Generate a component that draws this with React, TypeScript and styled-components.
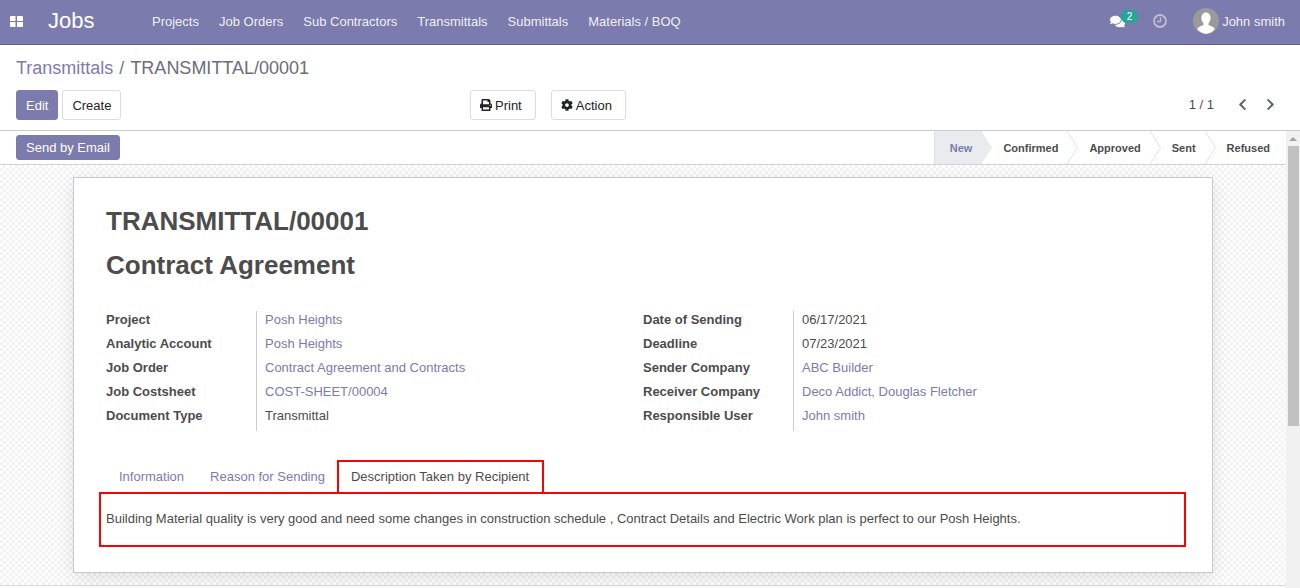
import React from 'react';
import styled, { createGlobalStyle } from 'styled-components';
import { FaPrint, FaCog, FaChevronLeft, FaChevronRight, FaComments } from 'react-icons/fa';

const GlobalStyle = createGlobalStyle`
    html, body {
        margin: 0;
        height: 100%;
        overflow: hidden;
    }
    body {
        font-family: "Liberation Sans", Arial, sans-serif;
        font-size: 13px;
        color: #4c4c4c;
    }
`;

const navLinks = ['Projects', 'Job Orders', 'Sub Contractors', 'Transmittals', 'Submittals', 'Materials / BOQ'];
const steps = ['New', 'Confirmed', 'Approved', 'Sent', 'Refused'];

const leftFields = [
    { label: 'Project', value: 'Posh Heights', link: true },
    { label: 'Analytic Account', value: 'Posh Heights', link: true },
    { label: 'Job Order', value: 'Contract Agreement and Contracts', link: true },
    { label: 'Job Costsheet', value: 'COST-SHEET/00004', link: true },
    { label: 'Document Type', value: 'Transmittal', link: false },
];
const rightFields = [
    { label: 'Date of Sending', value: '06/17/2021', link: false },
    { label: 'Deadline', value: '07/23/2021', link: false },
    { label: 'Sender Company', value: 'ABC Builder', link: true },
    { label: 'Receiver Company', value: 'Deco Addict, Douglas Fletcher', link: true },
    { label: 'Responsible User', value: 'John smith', link: true },
];

const FieldGroup = ({ fields }: { fields: typeof leftFields }) => (
    <Fields>
        {fields.map((f) => (
            <React.Fragment key={f.label}>
                <FieldLabel>{f.label}</FieldLabel>
                <FieldValue $link={f.link}>{f.value}</FieldValue>
            </React.Fragment>
        ))}
    </Fields>
);

const App = () => {
    return (
        <Page>
            <GlobalStyle />
            <NavBar>
                <AppsIcon>
                    <svg width="13" height="11" viewBox="0 0 13 11">
                        <path d="M0 1a1 1 0 0 1 1-1h4.500v5H0zM7 0h5a1 1 0 0 1 1 1v4H7zM0 6h5.500v5H1a1 1 0 0 1-1-1zM7 6h6v4a1 1 0 0 1-1 1H7z" fill="#fff" />
                    </svg>
                </AppsIcon>
                <Brand>Jobs</Brand>
                <NavLinks>
                    {navLinks.map((l) => <NavLink key={l}>{l}</NavLink>)}
                </NavLinks>
                <NavRight>
                    <Messages>
                        <FaComments />
                        <Badge>2</Badge>
                    </Messages>
                    <Activity>
                        <svg width="14" height="14" viewBox="0 0 14 14">
                            <circle cx="7" cy="7" r="6" fill="none" stroke="currentColor" strokeWidth="1.800" />
                            <path d="M7.500 3.200v4.300H4" fill="none" stroke="currentColor" strokeWidth="1.300" />
                        </svg>
                    </Activity>
                    <User>
                        <Avatar>
                            <svg width="26" height="26" viewBox="0 0 26 26">
                                <circle cx="13" cy="13" r="13" fill="#9a9a9a" />
                                <path d="M13 4.500c3 0 4.600 2.500 4.600 5.600 0 2.200-.9 4.100-2.100 5.200v1.600c1.800 1 5.300 1.600 6.300 4.200A13 13 0 0 1 13 26a13 13 0 0 1-8.800-4.900c1-2.600 4.500-3.200 6.300-4.200v-1.600c-1.200-1.100-2.100-3-2.100-5.200C8.400 7 10 4.500 13 4.500z" fill="#fff" />
                            </svg>
                        </Avatar>
                        <span>John smith</span>
                    </User>
                </NavRight>
            </NavBar>
            <ControlPanel>
                <Breadcrumb>
                    <CrumbLink>Transmittals</CrumbLink>
                    <CrumbSep>/</CrumbSep>
                    <span>TRANSMITTAL/00001</span>
                </Breadcrumb>
                <ControlRow>
                    <Buttons>
                        <Button $primary>Edit</Button>
                        <Button>Create</Button>
                    </Buttons>
                    <Sidebar>
                        <IconButton><FaPrint size={12} /> Print</IconButton>
                        <IconButton><FaCog size={12} /> Action</IconButton>
                    </Sidebar>
                    <Pager>
                        <span>1 / 1</span>
                        <PagerArrows>
                            <FaChevronLeft size={13} />
                            <FaChevronRight size={13} />
                        </PagerArrows>
                    </Pager>
                </ControlRow>
            </ControlPanel>
            <Body>
                <Main>
                    <StatusBar>
                        <SmallButton $primary>Send by Email</SmallButton>
                        <Steps>
                            {steps.map((s, i) => (
                                <Step key={s} $active={i === 0}>
                                    {s}
                                    {i < steps.length - 1 && (
                                        <Chevron viewBox="0 0 11 33" width="11" height="33">
                                            <polygon points="0,0 10.500,16.500 0,33" fill={i === 0 ? '#e9ecef' : '#fff'} />
                                            <polyline points="0,0 10.500,16.500 0,33" fill="none" stroke={i === 0 ? '#e9ecef' : '#dee2e6'} />
                                        </Chevron>
                                    )}
                                </Step>
                            ))}
                        </Steps>
                    </StatusBar>
                    <Sheet>
                        <Card>
                            <Title>TRANSMITTAL/00001</Title>
                            <Title>Contract Agreement</Title>
                            <Groups>
                                <FieldGroup fields={leftFields} />
                                <FieldGroup fields={rightFields} />
                            </Groups>
                            <Tabs>
                                <Tab>Information</Tab>
                                <Tab>Reason for Sending</Tab>
                                <ActiveTab>Description Taken by Recipient</ActiveTab>
                            </Tabs>
                            <TabPanel>
                                Building Material quality is very good and need some changes in construction schedule , Contract Details and Electric Work plan is perfect to our Posh Heights.
                            </TabPanel>
                        </Card>
                    </Sheet>
                </Main>
                <ScrollBar>
                    <ScrollArrow />
                    <ScrollThumb />
                </ScrollBar>
            </Body>
        </Page>
    );
};

const Page = styled.div`
    display: flex;
    flex-direction: column;
    width: 1300px;
    height: 588px;
    overflow: hidden;
    background: #fff;
`;

const NavBar = styled.div`
    display: flex;
    align-items: center;
    height: 45px;
    padding-bottom: 2px;
    box-sizing: border-box;
    flex: none;
    background: #7c7bad;
    border-bottom: 1px solid #5f5e97;
    color: #fff;
`;

const AppsIcon = styled.div`
    display: flex;
    width: 32px;
    padding-left: 10px;
    box-sizing: border-box;
`;

const Brand = styled.div`
    width: 120px;
    padding-left: 16px;
    box-sizing: border-box;
    font-size: 22px;
`;

const NavLinks = styled.div`
    display: flex;
    gap: 20px;
`;

const NavLink = styled.span`
    font-size: 13px;
    color: rgba(255, 255, 255, 0.9);
`;

const NavRight = styled.div`
    display: flex;
    align-items: center;
    margin-left: auto;
    padding-right: 15px;
`;

const Messages = styled.div`
    position: relative;
    display: flex;
    font-size: 15px;
    margin-right: 28px;
`;

const Badge = styled.span`
    position: absolute;
    top: -4px;
    left: 11px;
    width: 17px;
    height: 13px;
    border-radius: 6px;
    background: #26a69a;
    font-size: 10px;
    line-height: 13px;
    text-align: center;
`;

const Activity = styled.div`
    display: flex;
    color: rgba(255, 255, 255, 0.5);
    margin-right: 26px;
`;

const User = styled.div`
    display: flex;
    align-items: center;
    gap: 3px;
    color: rgba(255, 255, 255, 0.9);
`;

const Avatar = styled.div`
    display: flex;
`;

const ControlPanel = styled.div`
    flex: none;
    height: 86px;
    padding: 0 16px;
    box-sizing: border-box;
    border-bottom: 1px solid #ccc;
    background: #fff;
`;

const Breadcrumb = styled.div`
    display: flex;
    gap: 6px;
    height: 45px;
    padding-top: 2px;
    box-sizing: border-box;
    align-items: center;
    font-size: 18px;
    color: #6c6c7c;
`;

const CrumbLink = styled.span`
    color: #7c7bad;
`;

const CrumbSep = styled.span`
    color: #777;
`;

const ControlRow = styled.div`
    display: flex;
    align-items: center;
`;

const Buttons = styled.div`
    display: flex;
    gap: 4px;
    width: 454px;
`;

const Sidebar = styled.div`
    display: flex;
    gap: 15px;
`;

const Button = styled.button<{ $primary?: boolean }>`
    display: inline-flex;
    align-items: center;
    gap: 3px;
    height: 30px;
    padding: 0 9px;
    box-sizing: border-box;
    border: 1px solid ${({ $primary }) => ($primary ? '#7c7bad' : '#ddd')};
    border-radius: 3px;
    background: ${({ $primary }) => ($primary ? '#7c7bad' : '#fff')};
    color: ${({ $primary }) => ($primary ? '#fff' : '#212529')};
    font-family: inherit;
    font-size: 13px;
`;

const IconButton = styled(Button)`
    padding: 0 13px 0 9px;
`;

const SmallButton = styled(Button)`
    height: 25px;
    padding: 0 9px;
`;

const Pager = styled.div`
    display: flex;
    align-items: center;
    margin-left: auto;
    padding-bottom: 2px;
    color: #4c4c4c;
`;

const PagerArrows = styled.div`
    display: flex;
    gap: 15px;
    margin: 0 7px 0 22px;
    color: #5f636b;
`;

const Body = styled.div`
    display: flex;
    flex: 1;
    min-height: 0;
`;

const Main = styled.div`
    display: flex;
    flex-direction: column;
    flex: 1;
    min-width: 0;
`;

const StatusBar = styled.div`
    display: flex;
    align-items: center;
    justify-content: space-between;
    flex: none;
    height: 34px;
    padding-left: 16px;
    box-sizing: border-box;
    border-bottom: 1px solid #ced4da;
`;

const Steps = styled.div`
    display: flex;
    align-self: stretch;
`;

const Step = styled.div<{ $active?: boolean }>`
    position: relative;
    display: flex;
    align-items: center;
    padding: 0 9px 0 22px;
    font-size: 11px;
    font-weight: 700;
    color: ${({ $active }) => ($active ? '#7c7bad' : '#4c4c4c')};
    background: ${({ $active }) => ($active ? '#e9ecef' : 'transparent')};
    ${({ $active }) => $active && 'border-left: 1px solid #dee2e6; padding-left: 15px;'}

    &:last-child {
        padding-right: 16px;
    }
`;

const Chevron = styled.svg`
    position: absolute;
    top: 0;
    left: 100%;
    z-index: 1;
`;

const Sheet = styled.div`
    flex: 1;
    min-height: 0;
    display: flex;
    justify-content: center;
    padding-top: 12px;
    margin-bottom: 2px;
    box-sizing: border-box;
    border-bottom: 1px solid #d8d8d8;
    background-color: #fff;
    background-image: repeating-conic-gradient(#f3f3f3 0 25%, #fff 0 50%);
    background-size: 6px 6px;
`;

const Card = styled.div`
    width: 1140px;
    height: 396px;
    padding: 26px 26px 0 32px;
    box-sizing: border-box;
    background: #fff;
    border: 1px solid #c8c8d0;
    box-shadow: 0 5px 20px -1px rgba(0, 0, 0, 0.12);
`;

const Title = styled.h1`
    margin: 0 0 10px;
    height: 34px;
    line-height: 34px;
    font-size: 26px;
    font-weight: 700;
    color: #4c4c4c;
`;

const Groups = styled.div`
    display: flex;
    margin-top: 29px;
`;

const Fields = styled.div`
    display: grid;
    grid-template-columns: 151px 1fr;
    grid-auto-rows: 24px;
    width: 537px;
    flex: none;
`;

const FieldLabel = styled.div`
    padding-top: 1px;
    font-weight: 700;
    color: #4c4c4c;
    border-right: 1px solid #ccc;
`;

const FieldValue = styled.div<{ $link?: boolean }>`
    padding: 1px 0 0 8px;
    color: ${({ $link }) => ($link ? '#7c7bad' : '#4c4c4c')};
`;

const Tabs = styled.div`
    display: flex;
    margin-top: 29px;
`;

const Tab = styled.div`
    display: flex;
    align-items: center;
    height: 34px;
    padding: 0 13px 2px;
    box-sizing: border-box;
    color: #7c7bad;
`;

const ActiveTab = styled(Tab)`
    margin-left: -1px;
    padding: 0 13px 2px 12px;
    color: #4c4c4c;
    border: 2px solid #ff0000;
`;

const TabPanel = styled.div`
    height: 55px;
    margin-left: -7px;
    margin-top: -2px;
    padding: 17px 5px 0;
    box-sizing: border-box;
    border: 2px solid #ff0000;
`;

const ScrollBar = styled.div`
    flex: none;
    width: 14px;
    display: flex;
    flex-direction: column;
    align-items: center;
    background: #f1f1f1;
`;

const ScrollArrow = styled.div`
    margin-top: 6px;
    width: 0;
    height: 0;
    border-left: 4px solid transparent;
    border-right: 4px solid transparent;
    border-bottom: 4px solid #a3a3a3;
`;

const ScrollThumb = styled.div`
    width: 11px;
    height: 280px;
    margin-top: 5px;
    background: #c1c1c1;
`;

export default App;
